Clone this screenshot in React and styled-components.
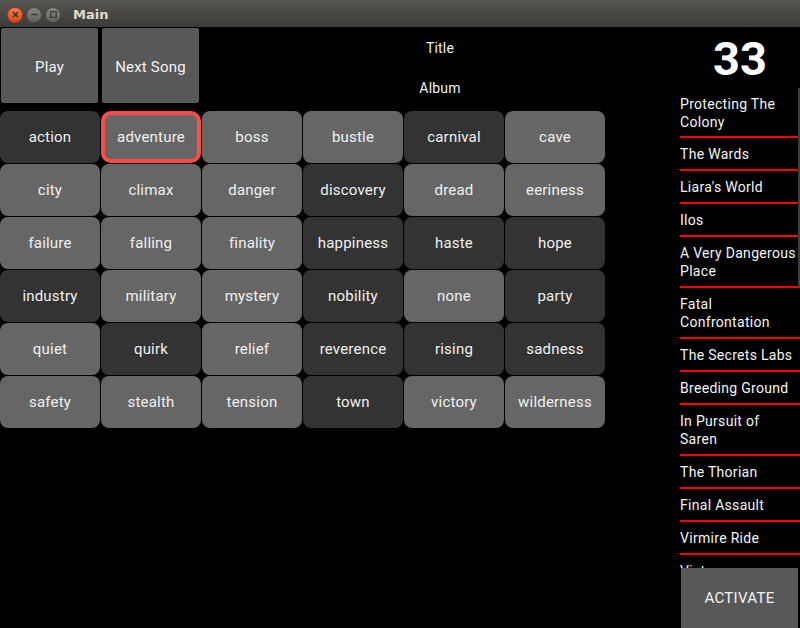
import React from "react";
import styled, { createGlobalStyle } from "styled-components";

const GlobalStyle = createGlobalStyle`
  html, body {
    margin: 0;
    padding: 0;
    background: #000;
  }
  body {
    font-family: Roboto, "Liberation Sans", sans-serif;
  }
`;

const Window = styled.div`
  width: 800px;
  height: 628px;
  display: flex;
  flex-direction: column;
  background: #000;
  overflow: hidden;
`;

const TitleBar = styled.div`
  height: 27px;
  flex: none;
  display: flex;
  align-items: center;
  padding-left: 7px;
  gap: 3px;
  background: linear-gradient(#57554f, #3c3b37);
  box-sizing: border-box;
  padding-top: 2px;
`;

const WinButton = styled.div`
  width: 16px;
  height: 16px;
  border-radius: 50%;
  display: flex;
  align-items: center;
  justify-content: center;
  box-sizing: border-box;
  border: 1px solid ${(p) => (p.$close ? "#b53d15" : "#4a4945")};
  background: ${(p) =>
    p.$close
      ? "linear-gradient(#f27a52, #df4b19)"
      : "linear-gradient(#86857f, #62615c)"};
`;

const WindowTitle = styled.div`
  margin-left: 9px;
  color: #dfdbd2;
  font-family: "DejaVu Sans", "Noto Sans", sans-serif;
  font-weight: bold;
  font-size: 13px;
`;

const Body = styled.div`
  flex: 1;
  display: flex;
  min-height: 0;
`;

const LeftColumn = styled.div`
  width: 680px;
  display: flex;
  flex-direction: column;
`;

const TopRow = styled.div`
  height: 84px;
  display: flex;
  align-items: flex-start;
  padding-top: 1px;
  box-sizing: border-box;
`;

const TopButton = styled.div`
  width: 97px;
  height: 75px;
  margin-left: ${(p) => (p.$first ? "1px" : "4px")};
  background: #585858;
  border-radius: 2px;
  color: #f2f2f2;
  font-size: 15px;
  letter-spacing: 0.2px;
  padding-top: 2px;
  box-sizing: border-box;
  display: flex;
  align-items: center;
  justify-content: center;
`;

const Info = styled.div`
  flex: 1;
  margin-left: 1px;
  display: flex;
  flex-direction: column;
`;

const InfoLine = styled.div`
  height: 40px;
  display: flex;
  align-items: center;
  justify-content: center;
  color: #f2f2f2;
  font-size: 14px;
  letter-spacing: 0.2px;
`;

const Grid = styled.div`
  display: grid;
  grid-template-columns: repeat(6, 100px);
  grid-auto-rows: 52px;
  gap: 1px;
`;

const Tile = styled.div`
  border-radius: ${(p) => (p.$selected ? "10px" : "8px")};
  background: ${(p) => (p.$dark ? "#333333" : "#666666")};
  border: ${(p) => (p.$selected ? "4px solid #ff4b4b" : "none")};
  box-sizing: border-box;
  color: #f0f0f0;
  font-size: 15px;
  letter-spacing: 0.2px;
  display: flex;
  align-items: center;
  justify-content: center;
`;

const RightColumn = styled.div`
  width: 120px;
  display: flex;
  flex-direction: column;
`;

const Counter = styled.div`
  height: 61px;
  display: flex;
  align-items: center;
  justify-content: center;
  color: #fff;
  font-size: 47px;
  font-weight: bold;
  padding-top: 2px;
  box-sizing: border-box;
`;

const SongList = styled.div`
  position: relative;
  height: 480px;
  overflow: hidden;
`;

const ScrollBar = styled.div`
  position: absolute;
  top: 0;
  right: 0;
  width: 2px;
  height: 199px;
  background: #3e3e3e;
`;

const Song = styled.div`
  padding: ${(p) => (p.$first ? "7px 0 5px" : "7px 0 6px")};
  line-height: 18px;
  font-size: 14px;
  letter-spacing: 0.3px;
  color: #f4f4f4;
  border-bottom: 2px solid #ff0000;
`;

const ActivateButton = styled.div`
  height: 60px;
  margin: 0 2px 0 1px;
  background: #585858;
  color: #f2f2f2;
  font-size: 15px;
  letter-spacing: 0.3px;
  display: flex;
  align-items: center;
  justify-content: center;
`;

const moods = [
  ["action", 1], ["adventure", 0, 1], ["boss", 0], ["bustle", 0], ["carnival", 1], ["cave", 0],
  ["city", 0], ["climax", 0], ["danger", 0], ["discovery", 1], ["dread", 0], ["eeriness", 0],
  ["failure", 0], ["falling", 0], ["finality", 0], ["happiness", 1], ["haste", 1], ["hope", 1],
  ["industry", 1], ["military", 0], ["mystery", 0], ["nobility", 1], ["none", 0], ["party", 1],
  ["quiet", 0], ["quirk", 1], ["relief", 0], ["reverence", 1], ["rising", 1], ["sadness", 1],
  ["safety", 0], ["stealth", 0], ["tension", 0], ["town", 1], ["victory", 0], ["wilderness", 0],
];

const songs = [
  "Protecting The Colony",
  "The Wards",
  "Liara's World",
  "Ilos",
  "A Very Dangerous Place",
  "Fatal Confrontation",
  "The Secrets Labs",
  "Breeding Ground",
  "In Pursuit of Saren",
  "The Thorian",
  "Final Assault",
  "Virmire Ride",
  "Victory",
];

const App = () => {
  return (
    <>
      <GlobalStyle />
      <Window>
        <TitleBar>
          <WinButton $close>
            <svg width="7" height="7" viewBox="0 0 7 7">
              <path d="M1 1L6 6M6 1L1 6" stroke="#3c2a22" strokeWidth="1.4" />
            </svg>
          </WinButton>
          <WinButton>
            <svg width="7" height="7" viewBox="0 0 7 7">
              <path d="M0.5 3.5H6.5" stroke="#3a3935" strokeWidth="1.4" />
            </svg>
          </WinButton>
          <WinButton>
            <svg width="7" height="7" viewBox="0 0 7 7">
              <rect x="0.7" y="0.7" width="5.6" height="5.6" fill="none" stroke="#3a3935" strokeWidth="1.2" />
            </svg>
          </WinButton>
          <WindowTitle>Main</WindowTitle>
        </TitleBar>
        <Body>
          <LeftColumn>
            <TopRow>
              <TopButton $first>Play</TopButton>
              <TopButton>Next Song</TopButton>
              <Info>
                <InfoLine>Title</InfoLine>
                <InfoLine>Album</InfoLine>
              </Info>
            </TopRow>
            <Grid>
              {moods.map(([name, dark, selected]) => (
                <Tile key={name} $dark={dark} $selected={selected}>
                  {name}
                </Tile>
              ))}
            </Grid>
          </LeftColumn>
          <RightColumn>
            <Counter>33</Counter>
            <SongList>
              {songs.map((s, i) => (
                <Song key={s} $first={i === 0}>
                  {s}
                </Song>
              ))}
              <ScrollBar />
            </SongList>
            <ActivateButton>ACTIVATE</ActivateButton>
          </RightColumn>
        </Body>
      </Window>
    </>
  );
};

export default App;
